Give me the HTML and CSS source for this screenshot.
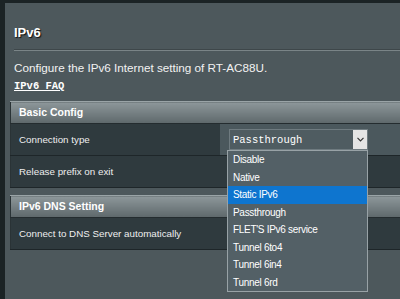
FILE: index.html
```html
<!DOCTYPE html>
<html>
<head>
    <meta charset="utf-8">
    <title>IPv6</title>
    <link rel="stylesheet" href="styles.css">
</head>
<body>
    <div class="panel">
        <div class="intro">
            <div class="title">IPv6</div>
            <div class="rule"></div>
            <div class="desc">Configure the IPv6 Internet setting of RT-AC88U.</div>
            <a class="faq" href="#">IPv6 FAQ</a>
        </div>

        <table class="form-table">
            <thead>
                <tr><th colspan="2">Basic Config</th></tr>
            </thead>
            <tbody>
                <tr>
                    <td class="label">Connection type</td>
                    <td class="value active">
                        <div class="select">
                            <span class="select-text">Passthrough</span>
                            <span class="select-arrow">
                                <svg width="7" height="5" viewBox="0 0 7 5"><polyline points="0.5,0.8 3.5,3.8 6.5,0.8" fill="none" stroke="#333" stroke-width="1.2"/></svg>
                            </span>
                        </div>
                        <ul class="options">
                            <li>Disable</li>
                            <li>Native</li>
                            <li class="selected">Static IPv6</li>
                            <li>Passthrough</li>
                            <li>FLET'S IPv6 service</li>
                            <li>Tunnel 6to4</li>
                            <li>Tunnel 6in4</li>
                            <li>Tunnel 6rd</li>
                        </ul>
                    </td>
                </tr>
                <tr>
                    <td class="label">Release prefix on exit</td>
                    <td class="value"></td>
                </tr>
            </tbody>
        </table>

        <table class="form-table second">
            <thead>
                <tr><th colspan="2">IPv6 DNS Setting</th></tr>
            </thead>
            <tbody>
                <tr>
                    <td class="label">Connect to DNS Server automatically</td>
                    <td class="value"></td>
                </tr>
            </tbody>
        </table>
    </div>
</body>
</html>
```

FILE: styles.css
```css
* {
    font-family: "Liberation Sans", Arial, sans-serif;
}
html, body {
    margin: 0;
    height: 100%;
    overflow: hidden;
    background: #1b2325;
}
body {
    padding: 3px 0 0 5px;
    box-sizing: border-box;
}
.panel {
    background: #4d585c;
    height: 100%;
    padding: 0 0 0 5px;
    box-sizing: border-box;
}
.intro {
    padding: 22px 0 0 4px;
}
.title {
    font-size: 13px;
    line-height: 16px;
    font-weight: bold;
    color: #fff;
    text-shadow: 1px 1px 1px #111;
}
.rule {
    margin-top: 8px;
    height: 1px;
    border-top: 1px solid #3e474a;
    background: #7a8487;
}
.desc {
    margin-top: 10px;
    font-size: 11.7px;
    line-height: 14px;
    color: #f2f2f2;
}
.faq {
    display: inline-block;
    margin-top: 2px;
    font-family: "Liberation Mono", monospace;
    font-size: 10.5px;
    line-height: 13px;
    font-weight: bold;
    color: #fff;
    text-decoration: underline;
}
.form-table {
    margin-top: 8px;
    width: calc(100% + 4px);
    border-collapse: collapse;
    border-left: 1px solid #2a3336;
}
.form-table.second {
    margin-top: 7px;
}
.form-table th {
    height: 21px;
    padding: 0 0 0 8px;
    text-align: left;
    font-size: 10.5px;
    line-height: 21px;
    color: #fff;
    background: linear-gradient(#8d979a, #5e686b);
    border-top: 1px solid #9aa4a7;
    border-bottom: 1px solid #242c2f;
}
.form-table td {
    height: 31px;
    padding: 0;
    background: #2f3a3e;
    border-bottom: 1px solid #1e2629;
    font-size: 9.8px;
    color: #eee;
}
.form-table td.label {
    width: 201px;
    padding-left: 8px;
}
.form-table td.value {
    position: relative;
    padding-left: 9px;
}
.form-table td.value.active {
    background: #4b585d;
}
.select {
    display: flex;
    align-items: center;
    width: 137px;
    height: 19px;
    border: 1px solid #6f7b80;
    background: #4f5c61;
}
.select-text {
    flex: 1;
    padding-left: 3px;
    font-family: "Liberation Mono", monospace;
    font-size: 10.5px;
    color: #fff;
}
.select-arrow {
    display: flex;
    align-items: center;
    justify-content: center;
    width: 14px;
    height: 19px;
    background: #e4e4e4;
}
.options {
    position: absolute;
    left: 7px;
    top: 26px;
    width: 139px;
    margin: 0;
    padding: 0;
    list-style: none;
    background: #536066;
    border: 1px solid #98a2a6;
    z-index: 2;
}
.options li {
    height: 17.5px;
    line-height: 17.5px;
    padding-left: 5px;
    font-size: 10px;
    letter-spacing: -0.3px;
    color: #fff;
}
.options li.selected {
    background: #0e75cf;
}
```
